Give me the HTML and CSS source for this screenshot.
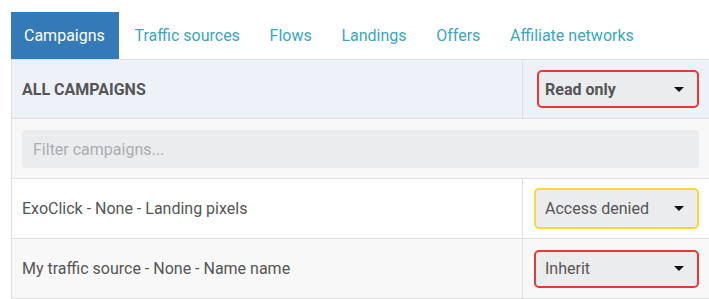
FILE: index.html
```html
<!DOCTYPE html>
<html>
<head>
<meta charset="utf-8">
<link rel="stylesheet" href="styles.css">
</head>
<body>
<div class="page">
  <nav class="tabs">
    <a class="tab active">Campaigns</a>
    <a class="tab">Traffic sources</a>
    <a class="tab">Flows</a>
    <a class="tab">Landings</a>
    <a class="tab">Offers</a>
    <a class="tab">Affiliate networks</a>
  </nav>
  <div class="table">
    <div class="row head">
      <div class="cell name"><span class="title">ALL CAMPAIGNS</span></div>
      <div class="cell perm">
        <div class="select bold red"><span>Read only</span><span class="caret"></span></div>
      </div>
    </div>
    <div class="row filter">
      <div class="filter-input">Filter campaigns...</div>
    </div>
    <div class="row item">
      <div class="cell name">ExoClick - None - Landing pixels</div>
      <div class="cell perm">
        <div class="select yellow tall"><span>Access denied</span><span class="caret"></span></div>
      </div>
    </div>
    <div class="row item alt">
      <div class="cell name">My traffic source - None - Name name</div>
      <div class="cell perm">
        <div class="select red"><span>Inherit</span><span class="caret"></span></div>
      </div>
    </div>
  </div>
</div>
</body>
</html>
```

FILE: styles.css
```css
* { box-sizing: border-box; }
html, body { margin: 0; padding: 0; background: #fff; }
body { font-family: Roboto, "Noto Sans", sans-serif; font-size: 16px; color: #555; }
.page { padding: 12px 0 0 11px; width: 711px; }
.tabs { display: flex; height: 47px; }
.tab { display: flex; align-items: center; padding: 0 14.5px 0 13px; margin-right: 2.2px; color: #3ba6be; font-size: 16px; }
.tab.active { background: #337ab7; color: #fff; }
.table { border: 1px solid #dedede; border-bottom: none; width: 700px; }
.row { display: flex; border-bottom: 1px solid #dedede; }
.cell { display: flex; align-items: center; }
.cell.name { flex: 1; padding-left: 10px; border-right: 1px solid #dedede; }
.cell.perm { width: 187px; padding: 0 11px 0 11px; }
.head { background: #eef2f8; height: 59px; }
.head .cell.perm { padding-left: 14px; }
.title { font-weight: 700; color: #555; }
.filter { background: #f8f8f8; height: 60px; padding: 11px 11px 10px 10px; }
.filter-input { flex: 1; background: #ebecee; border-radius: 4px; display: flex; align-items: center; padding-left: 11px; color: #a9acb0; }
.item { height: 60px; background: #fff; }
.item.alt { background: #f8f8f8; }
.select { flex: 1; height: 38px; border: 2px solid #e53935; border-radius: 5px; background: #ebecee; display: flex; align-items: center; justify-content: space-between; padding: 0 13px 0 9px; color: #555; }
.select.bold { font-weight: 700; padding-left: 6px; }
.select.yellow { border-color: #fdd835; }
.select.tall { height: 41px; }
.caret { width: 0; height: 0; border-left: 5px solid transparent; border-right: 5px solid transparent; border-top: 5px solid #111; }
```
